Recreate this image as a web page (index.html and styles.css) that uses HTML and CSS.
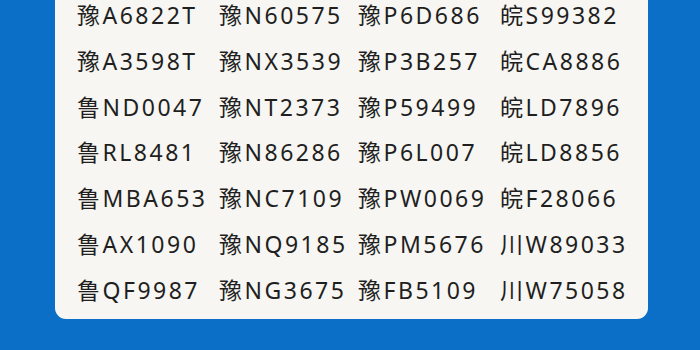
FILE: index.html
```html
<!DOCTYPE html>
<html lang="zh">
<head>
<meta charset="utf-8">
<link rel="stylesheet" href="styles.css">
</head>
<body>
<div class="page">
  <div class="card">
    <div class="grid">
      <span>豫A6822T</span><span>豫N60575</span><span>豫P6D686</span><span>皖S99382</span>
      <span>豫A3598T</span><span>豫NX3539</span><span>豫P3B257</span><span>皖CA8886</span>
      <span>鲁ND0047</span><span>豫NT2373</span><span>豫P59499</span><span>皖LD7896</span>
      <span>鲁RL8481</span><span>豫N86286</span><span>豫P6L007</span><span>皖LD8856</span>
      <span>鲁MBA653</span><span>豫NC7109</span><span>豫PW0069</span><span>皖F28066</span>
      <span>鲁AX1090</span><span>豫NQ9185</span><span>豫PM5676</span><span>川W89033</span>
      <span>鲁QF9987</span><span>豫NG3675</span><span>豫FB5109</span><span>川W75058</span>
    </div>
  </div>
</div>
</body>
</html>
```
FILE: styles.css
```css
html, body {
  margin: 0;
  padding: 0;
}
body {
  background: #0b6fc7;
  width: 700px;
  height: 350px;
  overflow: hidden;
}
.page {
  padding: 0 52px 0 55px;
}
.card {
  display: flow-root;
  background: #f7f6f2;
  border-radius: 0 0 11px 11px;
  height: 319px;
  padding: 0 0 0 22px;
  box-sizing: border-box;
}
.grid {
  display: grid;
  grid-template-columns: 142px 139px 142px auto;
  font-family: "Noto Sans", "Noto Sans CJK SC", sans-serif;
  font-size: 23px;
  letter-spacing: 2.5px;
  color: #1f1f1f;
  line-height: 45.8px;
  margin-top: -7px;
  white-space: nowrap;
}
```
